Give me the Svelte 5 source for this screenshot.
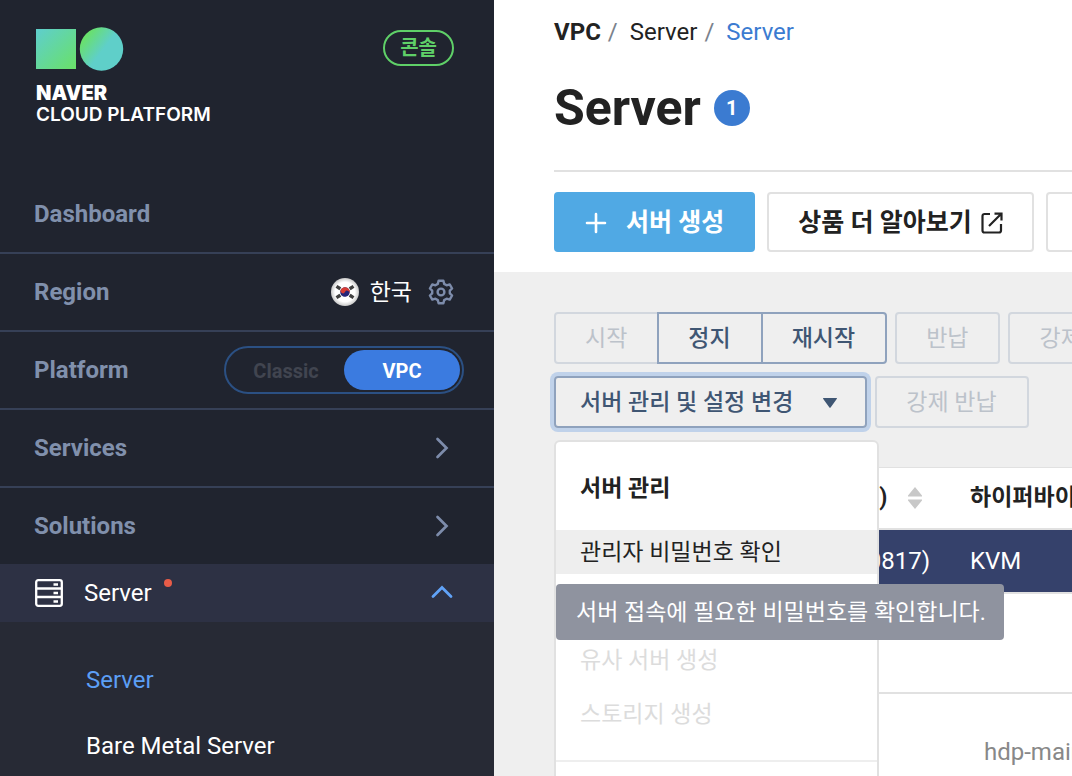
<script>
  let platform = "VPC";
  let menuOpen = true;

  const platforms = ["Classic", "VPC"];
  const groups = ["Services", "Solutions"];
  const serverLinks = [
    { name: "Server", active: true },
    { name: "Bare Metal Server", active: false }
  ];
  const powerActions = [
    { name: "시작", disabled: true },
    { name: "정지", disabled: false },
    { name: "재시작", disabled: false }
  ];
  const menuItems = [
    { name: "관리자 비밀번호 확인", help: "서버 접속에 필요한 비밀번호를 확인합니다." },
    { name: "서버 접속 콘솔", disabled: true },
    { name: "유사 서버 생성", disabled: true },
    { name: "스토리지 생성", disabled: true }
  ];
</script>

<div class="console">
  <aside class="sidebar">
    <header class="brand">
      <a class="logo" href="#home">
        <svg width="88" height="44" viewBox="0 0 88 44" aria-hidden="true">
          <defs>
            <linearGradient id="squareFill" x1="0" y1="0" x2="1" y2="1">
              <stop offset="0.05" stop-color="#5fcfc9" />
              <stop offset="0.95" stop-color="#69e06c" />
            </linearGradient>
            <linearGradient id="circleFill" x1="0" y1="0.2" x2="0.8" y2="0.8">
              <stop offset="0.12" stop-color="#69e06c" />
              <stop offset="0.62" stop-color="#5fcfc9" />
            </linearGradient>
          </defs>
          <rect y="2" width="40" height="40" fill="url(#squareFill)" />
          <circle cx="65.500" cy="22" r="21.700" fill="url(#circleFill)" />
        </svg>
        <strong>NAVER</strong>
        <span>CLOUD PLATFORM</span>
      </a>
      <a class="console-badge" href="#console">콘솔</a>
    </header>

    <nav>
      <a class="row" href="#dashboard">Dashboard</a>
      <div class="row">
        Region
        <div class="region">
          <svg width="28" height="28" viewBox="0 0 28 28" aria-hidden="true">
            <defs>
              <radialGradient id="flagShade">
                <stop offset="0.7" stop-color="#ffffff" />
                <stop offset="1" stop-color="#c9c9c9" />
              </radialGradient>
            </defs>
            <circle cx="14" cy="14" r="14" fill="url(#flagShade)" />
            <g transform="rotate(28 14 14)">
              <circle cx="14" cy="14" r="4.800" fill="#252478" />
              <path d="M9.200 14a4.800 4.800 0 0 1 9.600 0a2.400 2.400 0 0 1-4.800 0a2.400 2.400 0 0 0-4.800 0z" transform="matrix(-1 0 0 1 28 0)" fill="#d63b34" />
            </g>
            <g stroke="#3c3c3c" stroke-width="1.500">
              <path d="M5.200 10.200l1.800-2.800M6.500 11l1.800-2.800M7.800 11.800l1.800-2.800" />
              <path d="M22.800 10.200l-1.800-2.800M21.500 11l-1.800-2.800M20.200 11.800l-1.800-2.800" />
              <path d="M5.200 17.800l1.800 2.800M6.500 17l1.800 2.800M7.800 16.200l1.800 2.800" />
              <path d="M22.800 17.800l-1.800 2.800M21.500 17l-1.800 2.800M20.200 16.200l-1.800 2.800" />
            </g>
          </svg>
          <span>한국</span>
          <button class="icon-button" aria-label="Region settings">
            <svg width="26" height="26" viewBox="0 0 26 26" fill="none" stroke="#7d8cab" stroke-width="2.400" stroke-linejoin="round">
              <path d="M10.600 1.800h4.800l.8 3.100 2.400 1.400 3.100-.9 2.400 4.100-2.300 2.200v2.600l2.300 2.200-2.400 4.100-3.100-.9-2.400 1.400-.8 3.100h-4.800l-.8-3.100-2.400-1.400-3.100.9-2.400-4.100 2.300-2.200v-2.600L1.900 9.500l2.400-4.100 3.100.9 2.400-1.400z" />
              <circle cx="13" cy="13" r="3.400" />
            </svg>
          </button>
        </div>
      </div>
      <div class="row">
        Platform
        <div class="switch">
          {#each platforms as name}
            <button
              class:on={platform === name}
              aria-pressed={platform === name}
              on:click={() => (platform = name)}>{name}</button>
          {/each}
        </div>
      </div>
      {#each groups as name}
        <a class="row" href="#{name}">
          {name}
          <svg width="24" height="24" viewBox="0 0 24 24" fill="none" stroke="#7d8cab" stroke-width="2.700" stroke-linecap="round">
            <path d="M7.500 3l9 9-9 9" />
          </svg>
        </a>
      {/each}

      <a class="service" href="#server">
        <svg width="28" height="28" viewBox="0 0 28 28" fill="none" stroke="#fff" stroke-width="2.300" aria-hidden="true">
          <rect x="1.200" y="1.200" width="25.600" height="25.600" rx="2" />
          <path d="M1 9.500h26M1 18h26M18.500 5.500h4.500M18.500 14h4.500M18.500 22.500h4.500" />
        </svg>
        <span class="service-name">Server</span>
        <svg class="fold" width="24" height="24" viewBox="0 0 24 24" fill="none" stroke="#61a3f8" stroke-width="2.800" stroke-linecap="round">
          <path d="M3 15.500l9-9 9 9" />
        </svg>
      </a>
      <ul class="links">
        {#each serverLinks as link}
          <li><a class:active={link.active} href="#{link.name}">{link.name}</a></li>
        {/each}
      </ul>
    </nav>
  </aside>

  <main>
    <section class="head">
      <nav class="crumbs">
        <a class="root" href="#vpc">VPC</a>
        <i>/</i>
        <a href="#server">Server</a>
        <i>/</i>
        <a class="current" href="#server">Server</a>
      </nav>
      <h1>Server <span class="count">1</span></h1>
      <div class="actions">
        <button class="big create">
          <svg width="22" height="22" viewBox="0 0 22 22" stroke="#fff" stroke-width="2.600" stroke-linecap="round">
            <path d="M11 2v18M2 11h18" />
          </svg>
          서버 생성
        </button>
        <button class="big">
          상품 더 알아보기
          <svg width="22" height="22" viewBox="0 0 22 22" fill="none" stroke="#222" stroke-width="2.200">
            <path d="M9 2H3.500a2 2 0 0 0-2 2v14.500a2 2 0 0 0 2 2H18a2 2 0 0 0 2-2V12M13.500 1.600h7V8.500M20 2L8 14" />
          </svg>
        </button>
        <button class="big">새로 고침</button>
      </div>
    </section>

    <section class="body">
      <div class="toolbar">
        <div class="joined">
          {#each powerActions as action}
            <button class="tool" disabled={action.disabled}>{action.name}</button>
          {/each}
        </div>
        <button class="tool" disabled>반납</button>
        <button class="tool" disabled>강제 정지</button>
      </div>
      <div class="toolbar">
        <div class="dropdown">
          <button
            class="tool toggle"
            class:open={menuOpen}
            aria-haspopup="menu"
            aria-expanded={menuOpen}
            on:click={() => (menuOpen = !menuOpen)}>
            서버 관리 및 설정 변경
            <svg width="14" height="10" viewBox="0 0 14 10" fill="#3f5673">
              <path d="M.5 0h13a.5.500 0 0 1 .4.800L7.600 9.500a.8.800 0 0 1-1.200 0L.1.800A.5.500 0 0 1 .5 0z" />
            </svg>
          </button>
          {#if menuOpen}
            <div class="menu">
              <h2>서버 관리</h2>
              <ul>
                {#each menuItems as item}
                  <li class:hovered={item.help}>
                    <button disabled={item.disabled}>{item.name}</button>
                    {#if item.help}
                      <div class="tooltip" role="tooltip">{item.help}</div>
                    {/if}
                  </li>
                {/each}
              </ul>
              <h2>서버 설정 변경</h2>
            </div>
          {/if}
        </div>
        <button class="tool" disabled>강제 반납</button>
      </div>

      <table>
        <thead>
          <tr>
            <th class="image">
              <span>(OS)</span>
              <svg width="14" height="22" viewBox="0 0 14 22" fill="#c8c8c8">
                <path d="M7 0l7 8.500v1H0v-1zM7 22l7-8.500v-1H0v1z" />
              </svg>
            </th>
            <th>하이퍼바이저</th>
          </tr>
        </thead>
        <tbody>
          <tr class="selected">
            <td class="image">(200817)</td>
            <td>KVM</td>
          </tr>
          <tr class="blank">
            <td colspan="2"></td>
          </tr>
          <tr class="detail">
            <td class="image"></td>
            <td>hdp-main</td>
          </tr>
        </tbody>
      </table>
    </section>
  </main>
</div>

<style>
  :global(body) {
    margin: 0;
  }
  .console {
    display: flex;
    height: 100vh;
    overflow: hidden;
    color: #222;
    font-family: Roboto, "Noto Sans CJK KR", sans-serif;
    font-size: 24px;
    line-height: 32px;
  }
  .console * {
    box-sizing: border-box;
  }
  a {
    color: inherit;
    text-decoration: none;
  }
  button {
    font: inherit;
    color: inherit;
    white-space: nowrap;
    cursor: pointer;
  }
  svg {
    display: block;
    flex: none;
  }
  ul {
    list-style: none;
    margin: 0;
    padding: 0;
  }

  .sidebar {
    flex: none;
    width: 494px;
    background: #20242f;
    color: #fff;
  }
  .brand {
    display: flex;
    justify-content: space-between;
    align-items: flex-start;
    height: 176px;
    padding: 27px 40px 0 36px;
  }
  .logo {
    display: flex;
    flex-direction: column;
    font-family: Inter, sans-serif;
    font-size: 19px;
    line-height: 21px;
    font-weight: 600;
  }
  .logo strong {
    margin-top: 12px;
    font-size: 20px;
    font-weight: 900;
  }
  .console-badge {
    margin-top: 3px;
    padding: 0 15px;
    border: 2px solid #5fd068;
    border-radius: 18px;
    color: #5fd068;
    font-size: 20px;
    font-weight: 700;
  }
  .row {
    display: flex;
    align-items: center;
    justify-content: space-between;
    height: 78px;
    padding: 0 40px 0 34px;
    border-bottom: 2px solid #364057;
    color: #8090ac;
    font-weight: 700;
  }
  .row:has(+ .service) {
    height: 76px;
    border-bottom: 0;
  }
  .row:has(.switch) {
    padding-right: 30px;
  }
  .region {
    display: flex;
    align-items: center;
    gap: 11px;
    color: #fff;
    font-size: 23px;
    font-weight: 400;
  }
  .region span {
    padding-top: 2px;
  }
  .icon-button {
    margin-left: 5px;
    padding: 0;
    border: 0;
    background: none;
  }
  .switch {
    display: flex;
    width: 240px;
    height: 48px;
    padding: 2px;
    border: 2px solid #2b5083;
    border-radius: 24px;
    font-size: 20px;
  }
  .switch button {
    flex: 1;
    padding: 2px 0 0;
    border: 0;
    border-radius: 20px;
    background: none;
    color: #414550;
  }
  .switch .on {
    background: #3b7be0;
    color: #fff;
  }
  .service {
    display: flex;
    align-items: center;
    height: 58px;
    padding: 0 40px 0 35px;
    background: #2d3144;
  }
  .service-name {
    position: relative;
    margin-left: 21px;
  }
  .service-name::after {
    content: "";
    position: absolute;
    top: 2px;
    right: -20px;
    width: 8px;
    height: 8px;
    border-radius: 50%;
    background: #e85c48;
  }
  .fold {
    margin-left: auto;
  }
  .links {
    height: 300px;
    padding-top: 25px;
    background: #272a35;
  }
  .links a {
    display: block;
    padding: 17px 86px;
  }
  .links .active {
    color: #5c9ff5;
  }

  main {
    flex: 1;
    min-width: 0;
    overflow: hidden;
    background: #efefef;
  }
  .head {
    height: 272px;
    padding: 16px 0 0 60px;
    background: #fff;
  }
  .crumbs {
    display: flex;
  }
  .crumbs i {
    margin: 0 12px 0 7px;
    color: #7a828c;
    font-style: normal;
  }
  .root {
    font-weight: 700;
  }
  .current {
    color: #3b7bd1;
  }
  h1 {
    display: flex;
    align-items: center;
    gap: 13px;
    margin: 32px 0 34px;
    font-size: 50px;
    line-height: 56px;
  }
  .count {
    width: 36px;
    border-radius: 50%;
    background: #3b7bd1;
    color: #fff;
    font-size: 20px;
    line-height: 36px;
    text-align: center;
  }
  .actions {
    display: flex;
    gap: 12px;
    padding-top: 20px;
    border-top: 2px solid #e1e1e1;
  }
  .big {
    display: flex;
    flex: none;
    align-items: center;
    gap: 9px;
    height: 60px;
    padding: 2px 29px 0;
    border: 2px solid #e1e1e1;
    border-radius: 4px;
    background: #fff;
    font-size: 25px;
    font-weight: 700;
  }
  .create {
    gap: 19px;
    border-color: #50a9e4;
    background: #50a9e4;
    color: #fff;
  }

  .body {
    padding: 40px 0 0 60px;
  }
  .toolbar {
    display: flex;
    gap: 8px;
    margin-bottom: 12px;
  }
  .joined {
    display: flex;
  }
  .tool {
    flex: none;
    height: 52px;
    padding: 2px 30px 0 29px;
    border: 2px solid #8fa2bd;
    border-radius: 4px;
    background: none;
    color: #3f5673;
    font-size: 23px;
    font-weight: 500;
  }
  .tool:disabled {
    border-color: #d2d7de;
    color: #bcc2ca;
    font-weight: 400;
  }
  .joined .tool + .tool {
    margin-left: -2px;
  }
  .joined .tool:not(:last-child) {
    border-top-right-radius: 0;
    border-bottom-right-radius: 0;
  }
  .joined .tool:not(:first-child) {
    border-top-left-radius: 0;
    border-bottom-left-radius: 0;
  }
  .dropdown {
    position: relative;
  }
  .toggle {
    display: flex;
    align-items: center;
    gap: 30px;
    padding: 2px 28px 0 24px;
  }
  .open {
    box-shadow: 0 0 0 4px #c0d2ea;
  }
  .menu {
    position: absolute;
    z-index: 1;
    top: 64px;
    left: 0;
    width: 325px;
    border: 2px solid #e1e1e1;
    border-radius: 6px;
    background: #fff;
    font-size: 23px;
  }
  .menu h2 {
    margin: 0;
    padding: 31px 24px 25px;
    font-size: 23px;
    line-height: 32px;
  }
  .menu ul {
    display: grid;
    gap: 10px;
    padding-bottom: 24px;
    border-bottom: 2px solid #eee;
  }
  .menu li {
    position: relative;
  }
  .menu li button {
    width: 100%;
    height: 44px;
    padding: 2px 24px 0;
    border: 0;
    background: none;
    text-align: left;
  }
  .menu li button:disabled {
    color: #dcdcdc;
  }
  .menu .hovered {
    z-index: 1;
    background: #eee;
  }
  .tooltip {
    position: absolute;
    top: 54px;
    left: 0;
    padding: 13px 18px 11px 20px;
    border-radius: 4px;
    background: #8f939f;
    color: #fff;
    white-space: nowrap;
  }

  table {
    width: 100%;
    margin-top: 39px;
    border-spacing: 0;
    table-layout: fixed;
    background: #fff;
  }
  th,
  td {
    height: 64px;
    padding: 0 0 0 30px;
    border-bottom: 2px solid #e1e1e1;
    text-align: left;
    white-space: nowrap;
  }
  th {
    height: 63px;
    border-top: 1px solid #e1e1e1;
    font-size: 23px;
  }
  .image {
    width: 386px;
    padding-right: 10px;
    text-align: right;
  }
  th.image {
    padding-right: 18px;
  }
  th.image span,
  th.image svg {
    display: inline-block;
    vertical-align: middle;
  }
  th.image svg {
    margin-left: 15px;
  }
  .selected {
    background: #35416b;
    color: #fff;
  }
  .blank td {
    height: 100px;
  }
  .detail td {
    height: 118px;
    color: #888;
  }
  .detail td + td {
    padding-left: 44px;
  }
</style>
